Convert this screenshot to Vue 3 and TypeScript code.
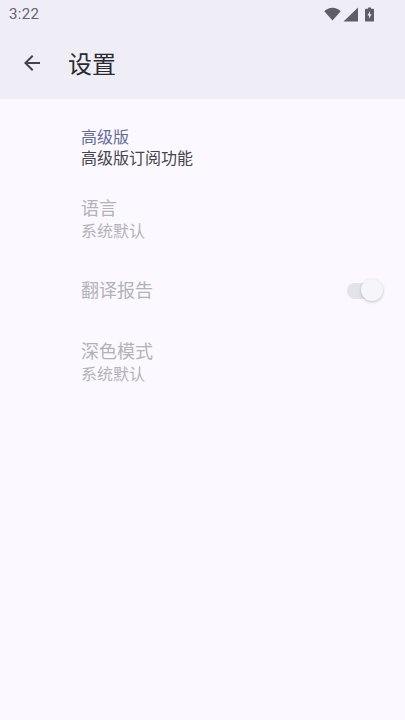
<script setup lang="ts">
interface Row { title: string; sub: string }
const rows: Row[] = [
  { title: '语言', sub: '系统默认' },
]
</script>

<template>
  <div class="page">
    <header class="appbar">
      <div class="status">
        <span class="time">3:22</span>
        <div class="status-icons">
          <svg width="17" height="14" viewBox="0 0 17 14"><path d="M0.3 4.2C2.5 2 5.3 0.8 8.5 0.8s6 1.2 8.2 3.4L8.5 13.4z" fill="#5f5e68"/></svg>
          <svg width="15" height="15" viewBox="0 0 15 15"><path d="M15 0.5V14.5H0.5z" fill="#5f5e68"/></svg>
          <svg class="battery" width="9" height="15" viewBox="0 0 9 15"><path fill-rule="evenodd" d="M3 0.5h3v1.2h2.2a.8.8 0 0 1 .8.8v11.2a.8.8 0 0 1-.8.8H.8a.8.8 0 0 1-.8-.8V2.500a.8.8 0 0 1 .8-.8H3zM5 4L2.500 8.500h1.700L3.800 12l2.700-4.800H4.800z" fill="#5f5e68"/></svg>
        </div>
      </div>
      <div class="toolbar">
        <svg class="back" width="24" height="24" viewBox="0 0 24 24"><path d="M20 11H7.830l5.590-5.590L12 4l-8 8 8 8 1.410-1.410L7.830 13H20z" fill="#44444c"/></svg>
        <h1 class="title">设置</h1>
      </div>
    </header>

    <main class="list">
      <section class="item premium">
        <div class="item-title accent">高级版</div>
        <div class="item-sub dark">高级版订阅功能</div>
      </section>
      <section v-for="r in rows" :key="r.title" class="item lang">
        <div class="item-title big">{{ r.title }}</div>
        <div class="item-sub">{{ r.sub }}</div>
      </section>
      <section class="item switch-row">
        <div class="item-title big">翻译报告</div>
        <div class="switch"><span class="track"></span><span class="thumb"></span></div>
      </section>
      <section class="item dark-mode">
        <div class="item-title big">深色模式</div>
        <div class="item-sub">系统默认</div>
      </section>
    </main>
  </div>
</template>

<style>
html, body { margin: 0; background: #fbf8ff; }
</style>

<style scoped>
.page {
  width: 405px;
  height: 720px;
  overflow: hidden;
  background: #fbf8ff;
  font-family: Roboto, "Noto Sans CJK SC", sans-serif;
}
.appbar { background: #efeef7; height: 99px; }
.status {
  height: 28px;
  display: flex;
  align-items: center;
  justify-content: space-between;
  padding: 0 31px 0 9px;
}
.time { font-size: 15px; color: #64636d; letter-spacing: 0.3px; }
.status-icons { display: flex; align-items: center; gap: 2px; }
.battery { margin-left: 5px; }
.toolbar {
  height: 69px;
  display: flex;
  align-items: center;
  padding-left: 20px;
  box-sizing: border-box;
}
.back { flex: none; }
.title {
  margin: 0 0 0 24px;
  font-size: 24px;
  font-weight: 400;
  color: #2a2a30;
}
.list { padding-left: 81px; padding-right: 21px; }
.item-title { font-size: 16px; line-height: 21px; }
.item-sub { font-size: 16px; line-height: 21px; color: #b3b2bb; }
.accent { color: #666b96; }
.dark { color: #45454c; }
.big { font-size: 18px; line-height: 24px; color: #b3b2bb; }
.premium { padding-top: 28px; }
.lang { padding-top: 28px; }
.switch-row {
  margin-top: 36px;
  display: flex;
  align-items: center;
  justify-content: space-between;
  padding-right: 1px;
}
.switch { position: relative; width: 36px; height: 26px; }
.track {
  position: absolute;
  left: 0; top: 5px;
  width: 34px; height: 16px;
  border-radius: 8px;
  background: #e4e3ea;
}
.thumb {
  position: absolute;
  right: 0; top: 1px;
  width: 22px; height: 22px;
  border-radius: 50%;
  background: #f6f5fa;
  box-shadow: 0 1px 3px rgba(60, 60, 80, 0.3);
}
.dark-mode { margin-top: 36px; }
</style>
